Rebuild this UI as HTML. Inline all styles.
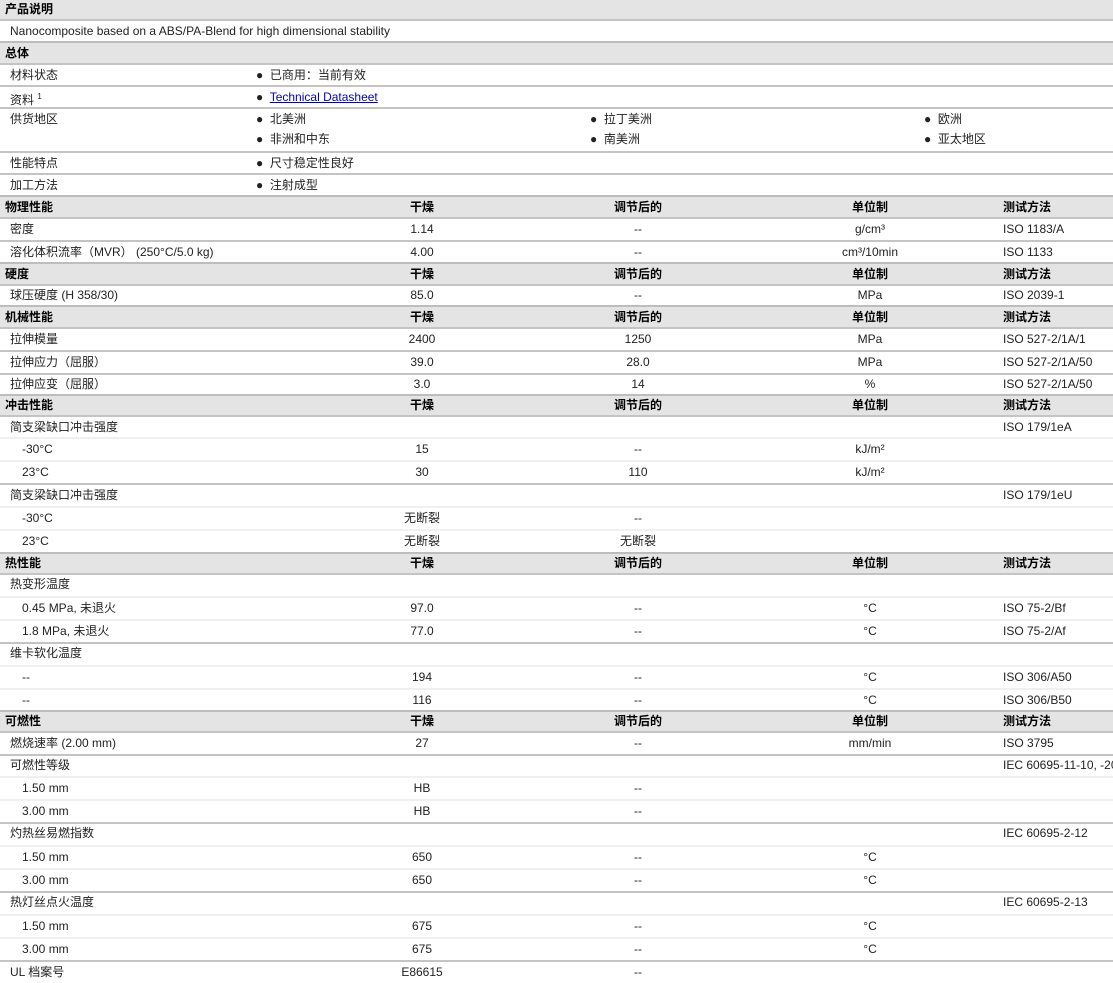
<!DOCTYPE html>
<html><head><meta charset="utf-8"><style>
body{margin:0;width:1113px;height:983px;overflow:hidden;background:#fff;font-family:"Liberation Sans","Noto Sans CJK SC",sans-serif;font-size:12px;color:#222;position:relative}
.r{position:absolute;left:0;width:1113px;box-sizing:border-box;border-top:2px solid #f0f0f0}
.m{border-top:2px solid #c4c4c4}
.h{background:#e4e4e4;border-top:2px solid #bdbdbd;font-weight:bold;color:#000}
.r span{position:absolute;top:0;white-space:nowrap}
.a{left:10px}.h .a{left:5px}.i{left:22px}
.b{left:322px;width:200px;text-align:center}
.c{left:538px;width:200px;text-align:center}
.d{left:770px;width:200px;text-align:center}
.e{left:1003px}
.p1{left:256px}.p2{left:590px}.p3{left:924px}
a{color:#00c;text-decoration:underline}
sup{font-size:8px}
</style></head><body>
<div class="r h" style="top:-2px;height:21px;line-height:19px"><span class="a">产品说明</span></div>
<div class="r m" style="top:19px;height:22px;line-height:20px"><span class="a">Nanocomposite based on a ABS/PA-Blend for high dimensional stability</span></div>
<div class="r h" style="top:41px;height:22px;line-height:20px"><span class="a">总体</span></div>
<div class="r m" style="top:63px;height:22px;line-height:20px"><span class="a">材料状态</span><span class="p1">●&nbsp; 已商用：当前有效</span></div>
<div class="r m" style="top:85px;height:22px;line-height:20px"><span class="a">资料 <sup>1</sup></span><span class="p1">●&nbsp; <a>Technical Datasheet</a></span></div>
<div class="r m" style="top:107px;height:44px;line-height:20px"><span class="a">供货地区</span><span class="p1">●&nbsp; 北美洲<br>●&nbsp; 非洲和中东</span><span class="p2">●&nbsp; 拉丁美洲<br>●&nbsp; 南美洲</span><span class="p3">●&nbsp; 欧洲<br>●&nbsp; 亚太地区</span></div>
<div class="r m" style="top:151px;height:22px;line-height:20px"><span class="a">性能特点</span><span class="p1">●&nbsp; 尺寸稳定性良好</span></div>
<div class="r m" style="top:173px;height:22px;line-height:20px"><span class="a">加工方法</span><span class="p1">●&nbsp; 注射成型</span></div>
<div class="r h" style="top:195px;height:22px;line-height:20px"><span class="a">物理性能</span><span class="b">干燥</span><span class="c">调节后的</span><span class="d">单位制</span><span class="e">测试方法</span></div>
<div class="r m" style="top:217px;height:23px;line-height:21px"><span class="a">密度</span><span class="b">1.14</span><span class="c">--</span><span class="d">g/cm³</span><span class="e">ISO 1183/A</span></div>
<div class="r m" style="top:240px;height:22px;line-height:20px"><span class="a">溶化体积流率（MVR） (250°C/5.0 kg)</span><span class="b">4.00</span><span class="c">--</span><span class="d">cm³/10min</span><span class="e">ISO 1133</span></div>
<div class="r h" style="top:262px;height:22px;line-height:20px"><span class="a">硬度</span><span class="b">干燥</span><span class="c">调节后的</span><span class="d">单位制</span><span class="e">测试方法</span></div>
<div class="r m" style="top:284px;height:21px;line-height:19px"><span class="a">球压硬度 (H 358/30)</span><span class="b">85.0</span><span class="c">--</span><span class="d">MPa</span><span class="e">ISO 2039-1</span></div>
<div class="r h" style="top:305px;height:22px;line-height:20px"><span class="a">机械性能</span><span class="b">干燥</span><span class="c">调节后的</span><span class="d">单位制</span><span class="e">测试方法</span></div>
<div class="r m" style="top:327px;height:23px;line-height:21px"><span class="a">拉伸模量</span><span class="b">2400</span><span class="c">1250</span><span class="d">MPa</span><span class="e">ISO 527-2/1A/1</span></div>
<div class="r m" style="top:350px;height:23px;line-height:21px"><span class="a">拉伸应力（屈服）</span><span class="b">39.0</span><span class="c">28.0</span><span class="d">MPa</span><span class="e">ISO 527-2/1A/50</span></div>
<div class="r m" style="top:373px;height:21px;line-height:19px"><span class="a">拉伸应变（屈服）</span><span class="b">3.0</span><span class="c">14</span><span class="d">%</span><span class="e">ISO 527-2/1A/50</span></div>
<div class="r h" style="top:394px;height:21px;line-height:19px"><span class="a">冲击性能</span><span class="b">干燥</span><span class="c">调节后的</span><span class="d">单位制</span><span class="e">测试方法</span></div>
<div class="r m" style="top:415px;height:22px;line-height:20px"><span class="a">简支梁缺口冲击强度</span><span class="e">ISO 179/1eA</span></div>
<div class="r" style="top:437px;height:23px;line-height:21px"><span class="i">-30°C</span><span class="b">15</span><span class="c">--</span><span class="d">kJ/m²</span></div>
<div class="r" style="top:460px;height:23px;line-height:21px"><span class="i">23°C</span><span class="b">30</span><span class="c">110</span><span class="d">kJ/m²</span></div>
<div class="r m" style="top:483px;height:23px;line-height:21px"><span class="a">简支梁缺口冲击强度</span><span class="e">ISO 179/1eU</span></div>
<div class="r" style="top:506px;height:23px;line-height:21px"><span class="i">-30°C</span><span class="b">无断裂</span><span class="c">--</span></div>
<div class="r" style="top:529px;height:23px;line-height:21px"><span class="i">23°C</span><span class="b">无断裂</span><span class="c">无断裂</span></div>
<div class="r h" style="top:552px;height:21px;line-height:19px"><span class="a">热性能</span><span class="b">干燥</span><span class="c">调节后的</span><span class="d">单位制</span><span class="e">测试方法</span></div>
<div class="r m" style="top:573px;height:23px;line-height:19px"><span class="a">热变形温度</span></div>
<div class="r" style="top:596px;height:23px;line-height:21px"><span class="i">0.45 MPa, 未退火</span><span class="b">97.0</span><span class="c">--</span><span class="d">°C</span><span class="e">ISO 75-2/Bf</span></div>
<div class="r" style="top:619px;height:23px;line-height:21px"><span class="i">1.8 MPa, 未退火</span><span class="b">77.0</span><span class="c">--</span><span class="d">°C</span><span class="e">ISO 75-2/Af</span></div>
<div class="r m" style="top:642px;height:23px;line-height:19px"><span class="a">维卡软化温度</span></div>
<div class="r" style="top:665px;height:23px;line-height:21px"><span class="i">--</span><span class="b">194</span><span class="c">--</span><span class="d">°C</span><span class="e">ISO 306/A50</span></div>
<div class="r" style="top:688px;height:22px;line-height:20px"><span class="i">--</span><span class="b">116</span><span class="c">--</span><span class="d">°C</span><span class="e">ISO 306/B50</span></div>
<div class="r h" style="top:710px;height:21px;line-height:19px"><span class="a">可燃性</span><span class="b">干燥</span><span class="c">调节后的</span><span class="d">单位制</span><span class="e">测试方法</span></div>
<div class="r m" style="top:731px;height:23px;line-height:21px"><span class="a">燃烧速率 (2.00 mm)</span><span class="b">27</span><span class="c">--</span><span class="d">mm/min</span><span class="e">ISO 3795</span></div>
<div class="r m" style="top:754px;height:22px;line-height:19px"><span class="a">可燃性等级</span><span class="e">IEC 60695-11-10, -20</span></div>
<div class="r" style="top:776px;height:23px;line-height:21px"><span class="i">1.50 mm</span><span class="b">HB</span><span class="c">--</span></div>
<div class="r" style="top:799px;height:23px;line-height:21px"><span class="i">3.00 mm</span><span class="b">HB</span><span class="c">--</span></div>
<div class="r m" style="top:822px;height:23px;line-height:19px"><span class="a">灼热丝易燃指数</span><span class="e">IEC 60695-2-12</span></div>
<div class="r" style="top:845px;height:23px;line-height:21px"><span class="i">1.50 mm</span><span class="b">650</span><span class="c">--</span><span class="d">°C</span></div>
<div class="r" style="top:868px;height:23px;line-height:21px"><span class="i">3.00 mm</span><span class="b">650</span><span class="c">--</span><span class="d">°C</span></div>
<div class="r m" style="top:891px;height:23px;line-height:19px"><span class="a">热灯丝点火温度</span><span class="e">IEC 60695-2-13</span></div>
<div class="r" style="top:914px;height:23px;line-height:21px"><span class="i">1.50 mm</span><span class="b">675</span><span class="c">--</span><span class="d">°C</span></div>
<div class="r" style="top:937px;height:23px;line-height:21px"><span class="i">3.00 mm</span><span class="b">675</span><span class="c">--</span><span class="d">°C</span></div>
<div class="r m" style="top:960px;height:23px;line-height:21px"><span class="a">UL 档案号</span><span class="b">E86615</span><span class="c">--</span></div>
</body></html>
